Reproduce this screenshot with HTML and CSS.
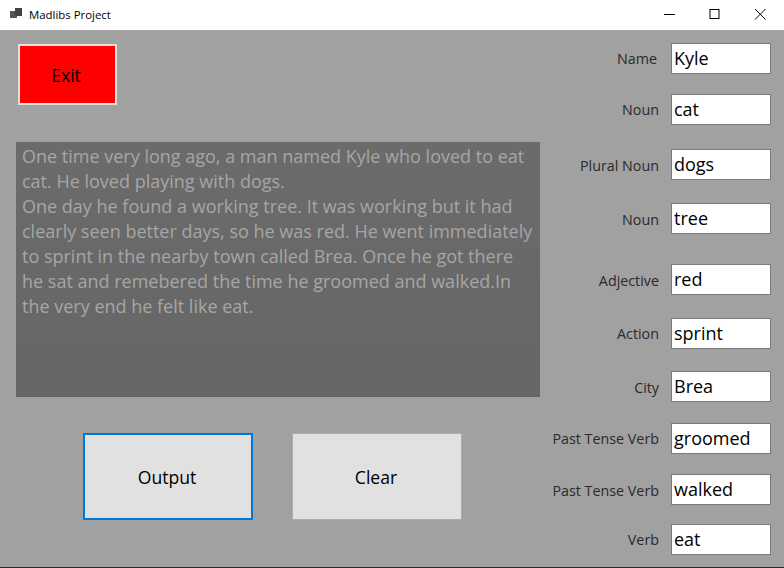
FILE: index.html
```html
<!DOCTYPE html>
<html lang="en">
  <head>
    <meta charset="UTF-8" />
    <title>Madlibs Project</title>
    <link rel="stylesheet" href="styles.css">
  </head>
  <body>
    <div class="titlebar">
      <svg class="app-icon" width="14" height="12" viewBox="0 0 14 12">
        <rect x="0" y="3" width="7" height="7" fill="#555"/>
        <rect x="5" y="0" width="7" height="8" fill="#444"/>
      </svg>
      <span class="title">Madlibs Project</span>
      <div class="win-btns">
        <svg class="win-btn" width="46" height="30" viewBox="0 0 46 30">
          <path d="M18 14.5h11" stroke="#000" fill="none"/>
        </svg>
        <svg class="win-btn" width="46" height="30" viewBox="0 0 46 30">
          <rect x="18" y="9.5" width="9" height="9" stroke="#000" fill="none"/>
        </svg>
        <svg class="win-btn" width="46" height="30" viewBox="0 0 46 30">
          <path d="M17 9l10.500 10.500M27.500 9l-10.500 10.500" stroke="#000" fill="none"/>
        </svg>
      </div>
    </div>

    <div class="client">
      <div class="left">
        <button class="exit">Exit</button>
        <div class="story">One time very long ago, a man named Kyle who loved to eat cat. He loved playing with dogs.<br>One day he found a working tree. It was working but it had clearly seen better days, so he was red. He went immediately to sprint in the nearby town called Brea. Once he got there he sat and remebered the time he groomed and walked.In the very end he felt like eat.</div>
        <div class="actions">
          <button class="action focused">Output</button>
          <button class="action">Clear</button>
        </div>
      </div>

      <div class="form">
        <label class="row"><span class="lbl lbl-name">Name</span><span class="field">Kyle</span></label>
        <label class="row"><span class="lbl">Noun</span><span class="field">cat</span></label>
        <label class="row"><span class="lbl lbl-low">Plural Noun</span><span class="field">dogs</span></label>
        <label class="row"><span class="lbl lbl-low">Noun</span><span class="field">tree</span></label>
        <label class="row"><span class="lbl lbl-low">Adjective</span><span class="field">red</span></label>
        <label class="row"><span class="lbl">Action</span><span class="field">sprint</span></label>
        <label class="row"><span class="lbl lbl-low">City</span><span class="field">Brea</span></label>
        <label class="row"><span class="lbl">Past Tense Verb</span><span class="field">groomed</span></label>
        <label class="row"><span class="lbl lbl-low">Past Tense Verb</span><span class="field">walked</span></label>
        <label class="row"><span class="lbl">Verb</span><span class="field">eat</span></label>
      </div>
    </div>
  </body>
</html>
```

FILE: styles.css
```css
* {
  margin: 0;
  padding: 0;
  box-sizing: border-box;
}
body {
  width: 784px;
  height: 568px;
  overflow: hidden;
  font-family: "Open Sans", "Noto Sans", sans-serif;
  background-color: #a0a0a0;
  display: flex;
  flex-direction: column;
}

/* title bar */
.titlebar {
  height: 30px;
  background-color: white;
  display: flex;
  align-items: center;
  padding-left: 10px;
  flex: none;
}
.app-icon {
  margin-right: 5px;
  margin-top: -3px;
}
.title {
  font-size: 11.4px;
  color: black;
  margin-top: -2px;
}
.win-btns {
  margin-left: auto;
  display: flex;
}
.win-btn {
  display: block;
}

/* window contents */
.client {
  flex: 1;
  display: flex;
  border-bottom: 1px solid #2b2b2b;
  background-color: #a1a1a1;
}
.left {
  width: 540px;
  padding: 14px 0 0 16px;
  display: flex;
  flex-direction: column;
}
.exit {
  width: 99px;
  height: 61px;
  margin-left: 2px;
  padding-right: 3px;
  background-color: red;
  border: 2px solid #e1e1e1;
  outline: none;
  font-family: inherit;
  font-size: 17.6px;
  color: black;
}
.story {
  margin-top: 37px;
  width: 524px;
  height: 255px;
  background: linear-gradient(#6b6b6b, #666666);
  color: #a6a6a6;
  font-size: 18px;
  line-height: 25px;
  padding: 2px 6px;
}
.actions {
  margin-top: 36px;
  margin-left: 67px;
  display: flex;
  gap: 39px;
}
.action {
  width: 170px;
  height: 87px;
  padding-right: 2px;
  background-color: #e1e1e1;
  border: 1px solid #adadad;
  font-family: inherit;
  font-size: 17.6px;
  color: black;
}
.focused {
  border: 2px solid #0078d7;
}

/* right hand column of labelled fields */
.form {
  padding-top: 13px;
  margin-left: 3px;
  width: 228px;
  display: grid;
  grid-template-rows: 51px 55px 54px 61px 54px 53px 52px 51px 50px 31px;
}
.row {
  display: flex;
  align-items: center;
  justify-content: flex-end;
  height: 31px;
}
.lbl {
  font-size: 14.3px;
  color: #2a2a2a;
  margin-right: 12px;
  white-space: nowrap;
}
.lbl-name {
  margin-right: 14px;
}
.lbl-low {
  padding-top: 2px;
}
.field {
  width: 100px;
  height: 31px;
  background-color: white;
  border: 1px solid #7a7a7a;
  font-size: 18px;
  line-height: 29px;
  padding-left: 2px;
  color: black;
}
```
